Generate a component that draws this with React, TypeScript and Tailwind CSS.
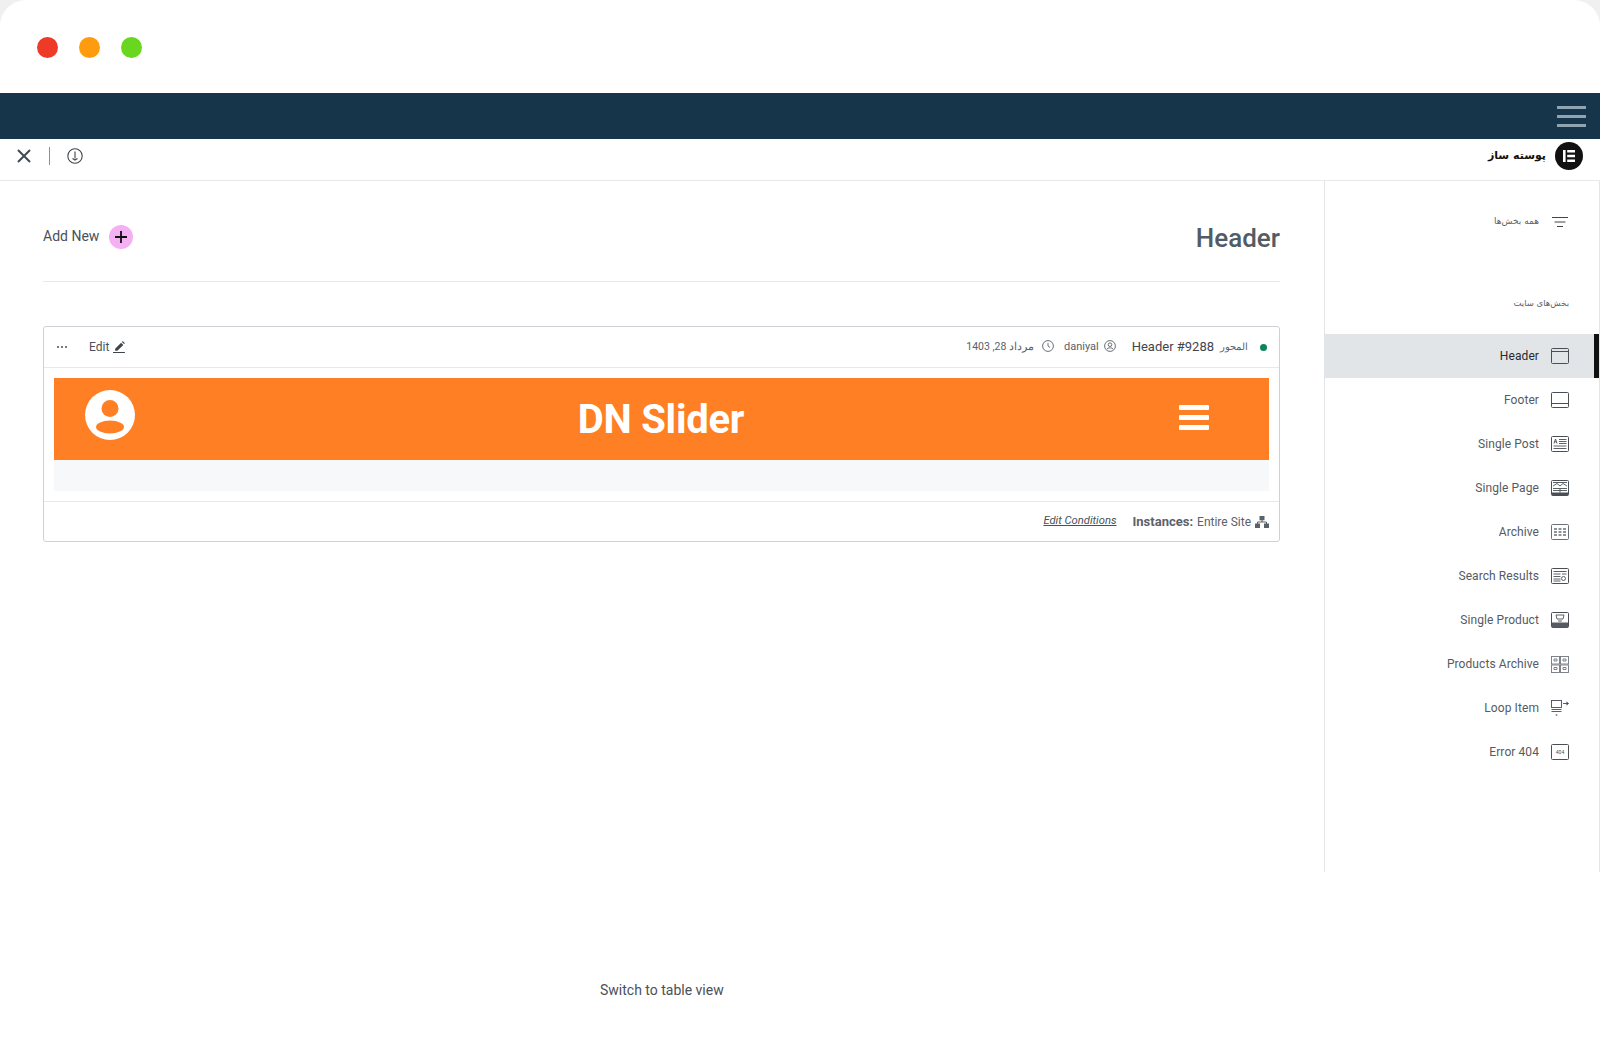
import React from 'react';

const roboto = { fontFamily: 'Roboto, sans-serif' };
const persian = { fontFamily: '"DejaVu Sans", sans-serif' };

// small template-type icons for the sidebar, all on a 18x16 box
const Frame: React.FC<{ children?: React.ReactNode }> = ({ children }) => (
  <svg width="18" height="16" viewBox="0 0 18 16" fill="none" stroke="#4a4f56" strokeWidth="1">
    <rect x="0.5" y="0.5" width="17" height="15" rx="1" />
    {children}
  </svg>
);

const icons: Record<string, React.ReactNode> = {
  Header: (
    <Frame>
      <path d="M1 3.5h16" />
    </Frame>
  ),
  Footer: (
    <Frame>
      <path d="M1 11.5h16" />
    </Frame>
  ),
  'Single Post': (
    <Frame>
      <path d="M3 7.5l1.5-4.5L6 7.5M3.6 5.8h1.8M8 3.5h7.5M8 5.5h7.5M8 7.5h7.5M2.5 10h13M2.5 12.5h13" strokeWidth="0.9" />
    </Frame>
  ),
  'Single Page': (
    <Frame>
      <path d="M2 2.5h14M2 6l4-2.5 3 2.5 3-2.5 4 2.5M2 8.5h14M2 10.5h14M9 8.5v4" strokeWidth="0.9" />
      <path d="M1 12.5h16v3H1z" fill="#4a4f56" stroke="none" />
    </Frame>
  ),
  Archive: (
    <svg width="18" height="16" viewBox="0 0 18 16" fill="none" stroke="#6a7077" strokeWidth="1">
      <rect x="0.5" y="0.5" width="17" height="15" rx="1" />
      <path d="M3 5h3M7.5 5h3M12 5h3M3 8h3M7.5 8h3M12 8h3M3 11h3M7.5 11h3M12 11h3" strokeWidth="1.4" />
    </svg>
  ),
  'Search Results': (
    <Frame>
      <path d="M2.5 3.5h13M2.5 6h7M2.5 8.5h7M2.5 11h7M2.5 13h7M11 6h4.5" strokeWidth="0.9" />
      <circle cx="12.5" cy="10.5" r="2" strokeWidth="0.9" />
    </Frame>
  ),
  'Single Product': (
    <Frame>
      <path d="M5 3h8l-1 4H6zM7 9h4" strokeWidth="0.9" />
      <path d="M1 10.5h16v5H1z" fill="#565b62" stroke="none" />
    </Frame>
  ),
  'Products Archive': (
    <svg width="18" height="17" viewBox="0 0 18 17" fill="none" stroke="#71777e" strokeWidth="0.9">
      <rect x="0.5" y="0.5" width="8" height="7.5" />
      <rect x="9.5" y="0.5" width="8" height="7.5" />
      <rect x="0.5" y="9" width="8" height="7.5" />
      <rect x="9.5" y="9" width="8" height="7.5" />
      <path d="M3 3h3v2H3zM12 3h3v2h-3zM3 11.5h3v2H3zM12 11.5h3v2h-3z" />
    </svg>
  ),
  'Loop Item': (
    <svg width="18" height="17" viewBox="0 0 18 17" fill="none" stroke="#4a4f56" strokeWidth="0.9">
      <rect x="0.5" y="0.5" width="10" height="7" />
      <path d="M0.5 9.5h10M0.5 11.5h10M12 3.5h5" />
      <path d="M15.5 2l2 1.5-2 1.5" fill="#4a4f56" />
      <circle cx="5.5" cy="15" r="1" fill="#8a8f96" stroke="none" />
    </svg>
  ),
  'Error 404': (
    <Frame>
      <text x="9" y="10" textAnchor="middle" fontSize="5" fontFamily="Roboto, sans-serif" fill="#4a4f56" stroke="none">
        404
      </text>
    </Frame>
  ),
};

const templates = [
  'Header',
  'Footer',
  'Single Post',
  'Single Page',
  'Archive',
  'Search Results',
  'Single Product',
  'Products Archive',
  'Loop Item',
  'Error 404',
];

export default function App() {
  return (
    <div className="h-[1041px] w-[1600px] overflow-hidden bg-[#f0f0f0]" style={roboto}>
      <div className="flex h-full flex-col rounded-t-[26px] bg-white">
        {/* window dots */}
        <div className="flex h-[93px] items-center gap-[21px] pl-[37px] pt-[1px]">
          <span className="h-[21px] w-[21px] rounded-full bg-[#ee3b27]" />
          <span className="h-[21px] w-[21px] rounded-full bg-[#ff9b0e]" />
          <span className="h-[21px] w-[21px] rounded-full bg-[#69d61f]" />
        </div>

        {/* dark admin bar */}
        <div className="flex h-[46px] items-center justify-end bg-[#17354a] pr-[14px]">
          <div className="flex w-[29px] flex-col gap-[6px]">
            <span className="h-[3px] bg-[#8fa3b0]" />
            <span className="h-[3px] bg-[#8fa3b0]" />
            <span className="h-[3px] bg-[#8fa3b0]" />
          </div>
        </div>

        {/* builder toolbar */}
        <div className="flex h-[42px] items-center justify-between border-b border-[#e6e8ea] pb-[7px] pl-[17px] pr-[17px]">
          <div className="flex items-center">
            <svg width="14" height="14" viewBox="0 0 14 14" stroke="#3f4a54" strokeWidth="2" fill="none">
              <path d="M1 1l12 12M13 1L1 13" />
            </svg>
            <span className="ml-[18px] h-[18px] w-px bg-[#8a9098]" />
            <svg className="ml-[17px]" width="16" height="16" viewBox="0 0 16 16" fill="none" stroke="#3f444b" strokeWidth="1.1">
              <circle cx="8" cy="8" r="7.2" />
              <path d="M8 3.5v7M5.5 10.5l2.5 1.5 2.5-1.5" />
            </svg>
          </div>
          <div className="flex items-center gap-[9px]">
            <span dir="rtl" className="text-[11px] font-bold text-[#111]" style={persian}>
              پوسته ساز
            </span>
            <span className="flex h-[28px] w-[28px] items-center justify-center rounded-full bg-[#111]">
              <svg width="12" height="12" viewBox="0 0 12 12" fill="#fff">
                <path d="M0 0h2.6v12H0zM4.2 0H12v2.4H4.2zM4.2 4.8H12v2.4H4.2zM4.2 9.6H12V12H4.2z" />
              </svg>
            </span>
          </div>
        </div>

        <div className="flex h-[691px]">
          {/* main column */}
          <div className="flex flex-1 flex-col pl-[43px] pr-[44px]">
            <div className="flex h-[101px] items-center justify-between border-b border-[#e6e8ea] pt-[11px]">
              <div className="flex items-center gap-[10px]">
                <span className="text-[14px] text-[#4a5058]">Add New</span>
                <span className="flex h-[24px] w-[24px] items-center justify-center rounded-full bg-[#f5b0f3]">
                  <svg width="14" height="14" viewBox="0 0 14 14" stroke="#111" strokeWidth="1.8">
                    <path d="M7 1v12M1 7h12" />
                  </svg>
                </span>
              </div>
              <h1 className="mt-[4px] text-[26px] font-medium text-[#525c66]">Header</h1>
            </div>

            {/* template card */}
            <div className="mt-[44px] h-[216px] rounded-[3px] border border-[#ced2d6]">
              <div className="flex h-[41px] items-center justify-between border-b border-[#e6e8ea] pl-[13px] pr-[12px]">
                <div className="flex items-center text-[12px] text-[#4a5058]">
                  <span className="flex gap-[2px]">
                    <span className="h-[2px] w-[2px] rounded-full bg-[#4a5058]" />
                    <span className="h-[2px] w-[2px] rounded-full bg-[#4a5058]" />
                    <span className="h-[2px] w-[2px] rounded-full bg-[#4a5058]" />
                  </span>
                  <span className="ml-[22px]">Edit</span>
                  <svg className="ml-[4px] mb-[2px]" width="13" height="13" viewBox="0 0 12 12" fill="#3f444b">
                    <path d="M2 8l5.5-5.5 2 2L4 10H2zM8.2 1.8l.8-.8 2 2-.8.8zM0 11h11v1H0z" />
                  </svg>
                </div>
                <div className="flex items-center">
                  <span className="text-[10.5px] text-[#5b6169]">1403 ,28 مرداد</span>
                  <svg className="ml-[8px] mb-[2px]" width="12" height="12" viewBox="0 0 12 12" fill="none" stroke="#5b6169" strokeWidth="0.9">
                    <circle cx="6" cy="6" r="5.4" />
                    <path d="M6 3v3l2 1.5" />
                  </svg>
                  <span className="ml-[10px] text-[11px] text-[#5b6169]">daniyal</span>
                  <svg className="ml-[5px] mb-[2px]" width="12" height="12" viewBox="0 0 12 12" fill="none" stroke="#5b6169" strokeWidth="0.9">
                    <circle cx="6" cy="6" r="5.4" />
                    <circle cx="6" cy="4.7" r="1.8" />
                    <path d="M3 9c1-1.6 5-1.6 6 0" />
                  </svg>
                  <span className="ml-[16px] mb-[1px] text-[13px] text-[#3f444b]">Header #9288</span>
                  <span className="ml-[6px] mb-[1px] text-[10px] text-[#5b6169]">المحور</span>
                  <span className="ml-[12px] h-[7px] w-[7px] rounded-full bg-[#0a875a]" />
                </div>
              </div>

              <div className="h-[134px] border-b border-[#e6e8ea] px-[10px] pt-[10px]">
                <div className="flex h-[82px] items-center justify-between bg-[#ff7f24] pl-[31px] pr-[60px]">
                  <svg className="mb-[9px]" width="50" height="50" viewBox="0 0 50 50">
                    <circle cx="25" cy="25" r="25" fill="#fff" />
                    <circle cx="25" cy="18.5" r="8.5" fill="#ff7f24" />
                    <ellipse cx="25" cy="37" rx="14" ry="6.5" fill="#ff7f24" />
                  </svg>
                  <span className="ml-[8px] mt-[2px] text-[40px] font-bold tracking-[-0.25px] text-white">DN Slider</span>
                  <div className="mb-[3px] flex w-[30px] flex-col gap-[5px]">
                    <span className="h-[5px] rounded-[1px] bg-white" />
                    <span className="h-[5px] rounded-[1px] bg-white" />
                    <span className="h-[5px] rounded-[1px] bg-white" />
                  </div>
                </div>
                <div className="h-[31px] bg-[#f7f8f9]" />
              </div>

              <div className="flex h-[38px] items-center justify-end gap-[16px] pr-[10px] pt-[1px]">
                <span className="text-[11.2px] italic text-[#4a5058] underline">Edit Conditions</span>
                <span className="flex items-center text-[12px] text-[#5b6169]">
                  <span className="text-[13px] font-bold">Instances:</span>
                  <span className="ml-[4px]">Entire Site</span>
                  <svg className="ml-[4px]" width="14" height="12" viewBox="0 0 14 12" fill="#5b6169">
                    <path d="M4.5 0h5v4.2h-5zM0 7.5h5V12H0zM9 7.5h5V12H9z" />
                    <path d="M7 4v2H2.5v2M7 6h4.5v2" fill="none" stroke="#5b6169" />
                  </svg>
                </span>
              </div>
            </div>
          </div>

          {/* template sidebar */}
          <div className="flex w-[276px] flex-col border-x border-[#e2e4e7]">
            <div className="flex h-[82px] items-center justify-end gap-[13px] pb-[1px] pr-[31px]">
              <span dir="rtl" className="text-[9px] text-[#5b6169]" style={persian}>
                همه بخش‌ها
              </span>
              <svg width="16" height="10" viewBox="0 0 16 10" stroke="#3f444b" strokeWidth="1">
                <path d="M0 .5h16M2.5 5h11M5 9.5h6" />
              </svg>
            </div>
            <div className="flex h-[71px] items-center justify-end pr-[30px] pt-[10px]">
              <span dir="rtl" className="text-[8.5px] text-[#5b6169]" style={persian}>
                بخش‌های سایت
              </span>
            </div>
            {templates.map((name) => {
              const active = name === 'Header';
              return (
                <div
                  key={name}
                  className={
                    active
                      ? 'flex h-[44px] items-center justify-end gap-[12px] border-r-[5px] border-[#111] bg-[#e2e5e8] pr-[25px] text-[12px] tracking-[0.08px] text-[#26292d]'
                      : 'flex h-[44px] items-center justify-end gap-[12px] pr-[30px] text-[12px] tracking-[0.08px] text-[#555b62]'
                  }
                >
                  <span>{name}</span>
                  <span className="flex w-[18px] justify-center">{icons[name]}</span>
                </div>
              );
            })}
          </div>
        </div>

        {/* footer link */}
        <div className="flex flex-1 justify-start bg-white pl-[600px] pt-[108px]">
          <span className="text-[14px] text-[#4a5058]">Switch to table view</span>
        </div>
      </div>
    </div>
  );
}
